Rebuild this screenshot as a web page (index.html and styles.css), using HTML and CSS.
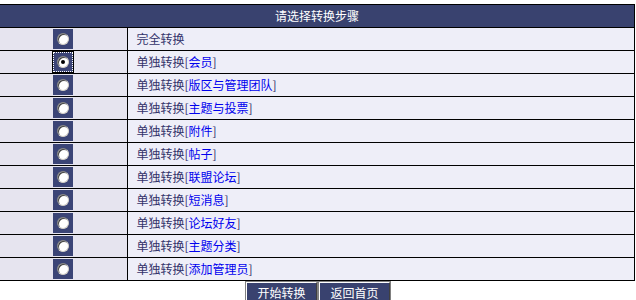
FILE: index.html
```html
<!DOCTYPE html>
<html>
<head>
<meta charset="utf-8">
<link rel="stylesheet" href="styles.css">
</head>
<body>
<table class="steps">
  <colgroup><col class="c1"><col class="c2"></colgroup>
  <tr><th colspan="2" class="head">请选择转换步骤</th></tr>
  <tr><td class="sel"><span class="rbox"><span class="radio"></span></span></td><td class="lbl">完全转换</td></tr>
  <tr><td class="sel"><span class="rbox focus"><span class="radio on"></span></span></td><td class="lbl">单独转换[<a>会员</a>]</td></tr>
  <tr><td class="sel"><span class="rbox"><span class="radio"></span></span></td><td class="lbl">单独转换[<a>版区与管理团队</a>]</td></tr>
  <tr><td class="sel"><span class="rbox"><span class="radio"></span></span></td><td class="lbl">单独转换[<a>主题与投票</a>]</td></tr>
  <tr><td class="sel"><span class="rbox"><span class="radio"></span></span></td><td class="lbl">单独转换[<a>附件</a>]</td></tr>
  <tr><td class="sel"><span class="rbox"><span class="radio"></span></span></td><td class="lbl">单独转换[<a>帖子</a>]</td></tr>
  <tr><td class="sel"><span class="rbox"><span class="radio"></span></span></td><td class="lbl">单独转换[<a>联盟论坛</a>]</td></tr>
  <tr><td class="sel"><span class="rbox"><span class="radio"></span></span></td><td class="lbl">单独转换[<a>短消息</a>]</td></tr>
  <tr><td class="sel"><span class="rbox"><span class="radio"></span></span></td><td class="lbl">单独转换[<a>论坛好友</a>]</td></tr>
  <tr><td class="sel"><span class="rbox"><span class="radio"></span></span></td><td class="lbl">单独转换[<a>主题分类</a>]</td></tr>
  <tr><td class="sel"><span class="rbox"><span class="radio"></span></span></td><td class="lbl">单独转换[<a>添加管理员</a>]</td></tr>
</table>
<div class="actions">
  <button class="btn">开始转换</button>
  <button class="btn">返回首页</button>
</div>
</body>
</html>
```
FILE: styles.css
```css
html, body {
  margin: 0;
  padding: 0;
  background: #ffffff;
}
body {
  padding-top: 4px;
  font-family: "Noto Sans CJK SC", "Noto Sans", sans-serif;
  font-size: 12px;
  overflow: hidden;
}
.steps {
  border-collapse: collapse;
  width: 635px;
  table-layout: fixed;
}
.c1 {
  width: 127px;
}
.steps th, .steps td {
  border: 1px solid #000;
  padding: 0;
  height: 22px;
  line-height: 22px;
}
.steps tr > :first-child {
  border-left: none;
}
.head {
  background: #39426f;
  color: #ffffff;
  font-weight: normal;
  text-align: center;
  font-size: 12px;
}
.sel {
  background: #e6e4ef;
  text-align: center;
}
.steps .lbl {
  background: #eeeef8;
  color: #33336a;
  padding-left: 9px;
}
.lbl a {
  color: #0000ee;
}
.rbox {
  display: inline-flex;
  align-items: center;
  justify-content: center;
  width: 20px;
  height: 20px;
  background: #3b4476;
  vertical-align: top;
  box-sizing: border-box;
  margin-top: 1px;
}
.rbox.focus {
  outline: 1px dotted #ffffff;
  outline-offset: -1px;
  box-shadow: 0 0 0 1px #000;
}
.radio {
  display: block;
  width: 12px;
  height: 12px;
  border-radius: 50%;
  background: #ffffff;
  box-sizing: border-box;
  border: 1px solid #808080;
  border-right-color: #d4d0c8;
  border-bottom-color: #d4d0c8;
  box-shadow: inset 1px 1px 0 #404040;
  position: relative;
}
.radio.on::after {
  content: "";
  position: absolute;
  left: 3px;
  top: 3px;
  width: 4px;
  height: 4px;
  border-radius: 50%;
  background: #000;
}
.actions {
  display: flex;
  justify-content: center;
  gap: 2px;
  margin-top: 1px;
}
.btn {
  background: #39426f;
  color: #ffffff;
  font-family: "Noto Sans CJK SC", "Noto Sans", sans-serif;
  font-size: 12px;
  width: 71px;
  height: 22px;
  padding: 0;
  border: 1px solid;
  border-color: #ffffff #404040 #404040 #ffffff;
  box-shadow: 0 0 0 1px #808080;
  margin: 0;
  line-height: 18px;
}
```
